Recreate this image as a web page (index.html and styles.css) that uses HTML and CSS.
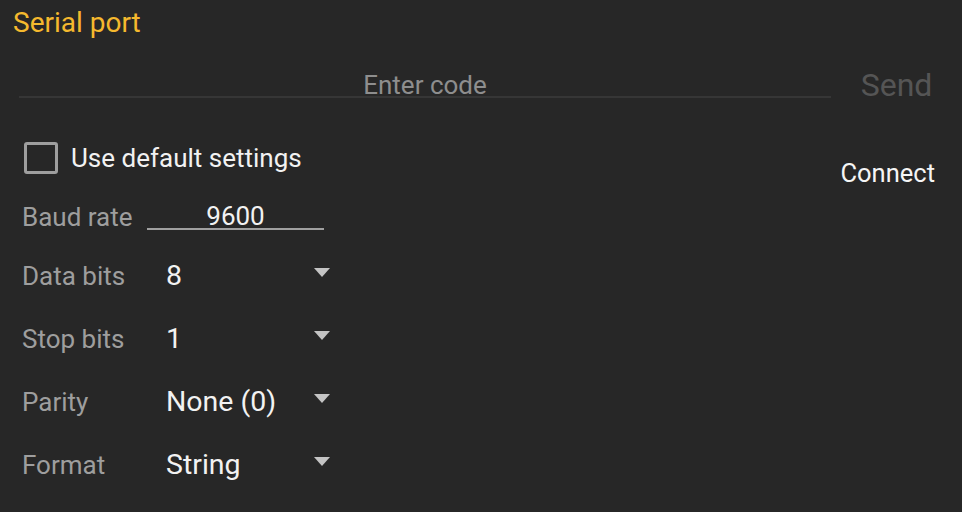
FILE: index.html
```html
<!DOCTYPE html>
<html>
<head>
<meta charset="utf-8">
<link rel="stylesheet" href="styles.css">
</head>
<body>
<div class="title">Serial port</div>
<div class="send-row">
  <div class="code-input">Enter code</div>
  <div class="send-btn">Send</div>
</div>
<div class="main">
  <div class="left">
    <div class="check-row">
      <span class="checkbox"></span>
      <span class="check-label">Use default settings</span>
    </div>
    <div class="grid">
      <div class="label">Baud rate</div>
      <div><div class="baud-input">9600</div></div>
      <div class="label">Data bits</div>
      <div class="dropdown"><span>8</span><span class="arrow"></span></div>
      <div class="label">Stop bits</div>
      <div class="dropdown"><span>1</span><span class="arrow"></span></div>
      <div class="label">Parity</div>
      <div class="dropdown"><span>None (0)</span><span class="arrow"></span></div>
      <div class="label">Format</div>
      <div class="dropdown"><span>String</span><span class="arrow"></span></div>
    </div>
  </div>
  <div class="right">
    <div class="connect-btn">Connect</div>
  </div>
</div>
</body>
</html>
```
FILE: styles.css
```css
html, body {
  margin: 0;
  padding: 0;
  background: #272727;
  width: 962px;
  height: 512px;
  overflow: hidden;
  font-family: Roboto, "Noto Sans", sans-serif;
}
.title {
  padding: 3px 0 0 13px;
  font-size: 28px;
  line-height: 40px;
  color: #f5b92e;
}
.send-row {
  display: flex;
  align-items: flex-start;
  margin-top: 22px;
}
.code-input {
  flex: 1;
  margin: 9px 0 0 19px;
  border-bottom: 2px solid #363636;
  text-align: center;
  font-size: 26px;
  line-height: 22px;
  color: #8e8e8e;
}
.send-btn {
  width: 131px;
  text-align: center;
  font-size: 32px;
  line-height: 40px;
  color: #555555;
}
.main {
  display: flex;
  margin-top: 20px;
}
.left {
  flex: 1;
  padding-left: 22px;
}
.check-row {
  display: flex;
  align-items: center;
  height: 62px;
  padding-top: 2px;
}
.checkbox {
  width: 28px;
  height: 26px;
  border: 3px solid #9e9e9e;
  border-radius: 3px;
  margin-left: 2px;
  margin-right: 13px;
}
.check-label {
  font-size: 26px;
  line-height: 30px;
  color: #f2f2f2;
}
.grid {
  display: grid;
  grid-template-columns: 125px 188px;
  grid-template-rows: 55px;
  grid-auto-rows: 63px;
  align-items: center;
}
.label {
  font-size: 26px;
  line-height: 30px;
  color: #9e9e9e;
}
.baud-input {
  width: 177px;
  border-bottom: 2px solid #a0a0a0;
  text-align: center;
  font-size: 26px;
  line-height: 24px;
  color: #f2f2f2;
}
.dropdown {
  display: flex;
  align-items: center;
  justify-content: space-between;
  padding-left: 19px;
  font-size: 28.5px;
  line-height: 32px;
  color: #f2f2f2;
}
.arrow {
  width: 0;
  height: 0;
  border-left: 8px solid transparent;
  border-right: 8px solid transparent;
  border-top: 9px solid #c4c4c4;
  margin-right: 5px;
  margin-bottom: 6px;
}
.right {
  padding-top: 33px;
  padding-right: 27px;
}
.connect-btn {
  font-size: 25.5px;
  line-height: 30px;
  color: #f5f5f5;
}
```
